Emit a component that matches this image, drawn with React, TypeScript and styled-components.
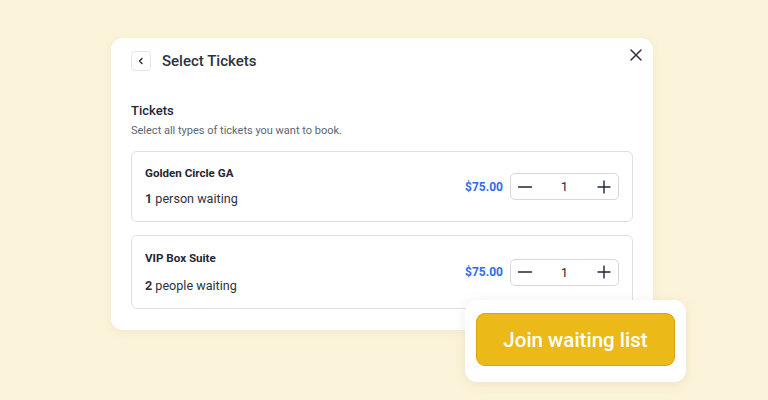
import React from "react";
import styled, { createGlobalStyle } from "styled-components";

const Global = createGlobalStyle`
  html, body { margin: 0; padding: 0; }
  body { background: #fcf4da; font-family: Roboto, "Noto Sans", sans-serif; -webkit-font-smoothing: antialiased; }
`;

const Page = styled.div`
  position: relative;
  width: 768px;
  height: 400px;
  overflow: hidden;
  background: #fcf4da;
  padding: 38px 0 0 111px;
  box-sizing: border-box;
`;

const Card = styled.div`
  position: relative;
  width: 542px;
  box-sizing: border-box;
  background: #fff;
  border-radius: 12px;
  padding: 13px 20px 21px;
  box-shadow: 0 2px 10px rgba(120, 100, 40, 0.08);
`;

const Header = styled.div`
  display: flex;
  align-items: center;
  gap: 11px;
  height: 20px;
`;

const BackButton = styled.button`
  width: 20px;
  height: 20px;
  padding: 0;
  display: flex;
  align-items: center;
  justify-content: center;
  border: 1px solid #e3e5e8;
  border-radius: 4px;
  background: #fff;
  color: #1f2937;
`;

const Title = styled.h1`
  margin: 0;
  font-size: 15px;
  font-weight: 500;
  color: #2c333d;
`;

const CloseButton = styled.button`
  position: absolute;
  top: 8px;
  right: 8px;
  width: 18px;
  height: 18px;
  padding: 0;
  border: none;
  background: none;
  display: flex;
  align-items: center;
  justify-content: center;
  color: #2c333d;
`;

const Section = styled.div`
  margin-top: 32px;
`;

const SectionTitle = styled.div`
  font-size: 13px;
  font-weight: 500;
  color: #1f2733;
  line-height: 16px;
`;

const SectionSub = styled.div`
  margin-top: 5px;
  font-size: 11px;
  color: #5f6670;
  line-height: 14px;
`;

const List = styled.div`
  margin-top: 13px;
  display: flex;
  flex-direction: column;
  gap: 13px;
`;

const TicketCard = styled.div<{ $h: number }>`
  height: ${(p) => p.$h}px;
  box-sizing: border-box;
  border: 1px solid #dcdfe3;
  border-radius: 6px;
  padding: 0 13px;
  display: flex;
  align-items: center;
  justify-content: space-between;
`;

const Info = styled.div<{ $gap: number }>`
  display: flex;
  flex-direction: column;
  gap: ${(p) => p.$gap}px;
`;

const TicketName = styled.div`
  font-size: 11.6px;
  font-weight: 700;
  color: #1f2733;
  line-height: 15px;
`;

const Waiting = styled.div`
  font-size: 12.6px;
  color: #2c333d;
  line-height: 16px;
  b { font-weight: 700; }
`;

const Right = styled.div`
  display: flex;
  align-items: center;
  gap: 7px;
`;

const Price = styled.div`
  font-size: 12px;
  font-weight: 700;
  color: #2f6cf0;
`;

const Stepper = styled.div`
  width: 109px;
  height: 27px;
  box-sizing: border-box;
  border: 1px solid #d5d8dc;
  border-radius: 5px;
  display: flex;
  align-items: center;
  justify-content: space-between;
  padding: 0 6px;
`;

const StepBtn = styled.button`
  width: 16px;
  height: 16px;
  padding: 0;
  border: none;
  background: none;
  display: flex;
  align-items: center;
  justify-content: center;
  color: #1f2733;
`;

const Qty = styled.span`
  font-size: 13px;
  color: #1f2733;
`;

const Floating = styled.div`
  position: absolute;
  left: 465px;
  top: 300px;
  width: 221px;
  height: 82px;
  box-sizing: border-box;
  background: #fff;
  border-radius: 12px;
  padding: 13px 11px;
  box-shadow: 0 2px 12px rgba(120, 100, 40, 0.12);
`;

const JoinButton = styled.button`
  width: 199px;
  height: 53px;
  box-sizing: border-box;
  border: 1px solid #d4a511;
  border-radius: 9px;
  background: #ebba19;
  color: #fff;
  font-family: Roboto, "Noto Sans", sans-serif;
  font-size: 20.5px;
  font-weight: 500;
`;

const Minus = () => (
  <svg width="16" height="16" viewBox="0 0 16 16" fill="none" stroke="currentColor" strokeWidth="1.4" strokeLinecap="round">
    <path d="M1.5 8h13" />
  </svg>
);

const Plus = () => (
  <svg width="16" height="16" viewBox="0 0 16 16" fill="none" stroke="currentColor" strokeWidth="1.4" strokeLinecap="round">
    <path d="M2 8h12M8 2v12" />
  </svg>
);

type Ticket = { name: string; count: number; label: string; h: number; gap: number };

const tickets: Ticket[] = [
  { name: "Golden Circle GA", count: 1, label: "person waiting", h: 71, gap: 10 },
  { name: "VIP Box Suite", count: 2, label: "people waiting", h: 74, gap: 12 },
];

export default function App() {
  return (
    <>
      <Global />
      <Page>
        <Card>
          <Header>
            <BackButton>
              <svg width="10" height="10" viewBox="0 0 10 10" fill="none" stroke="currentColor" strokeWidth="1.4" strokeLinecap="round" strokeLinejoin="round">
                <path d="M6 2.5L3.5 5L6 7.5" />
              </svg>
            </BackButton>
            <Title>Select Tickets</Title>
          </Header>
          <CloseButton>
            <svg width="12" height="12" viewBox="0 0 12 12" fill="none" stroke="currentColor" strokeWidth="1.5" strokeLinecap="round">
              <path d="M1 1l10 10M11 1L1 11" />
            </svg>
          </CloseButton>
          <Section>
            <SectionTitle>Tickets</SectionTitle>
            <SectionSub>Select all types of tickets you want to book.</SectionSub>
            <List>
              {tickets.map((t) => (
                <TicketCard key={t.name} $h={t.h}>
                  <Info $gap={t.gap}>
                    <TicketName>{t.name}</TicketName>
                    <Waiting>
                      <b>{t.count}</b> {t.label}
                    </Waiting>
                  </Info>
                  <Right>
                    <Price>$75.00</Price>
                    <Stepper>
                      <StepBtn><Minus /></StepBtn>
                      <Qty>1</Qty>
                      <StepBtn><Plus /></StepBtn>
                    </Stepper>
                  </Right>
                </TicketCard>
              ))}
            </List>
          </Section>
        </Card>
        <Floating>
          <JoinButton>Join waiting list</JoinButton>
        </Floating>
      </Page>
    </>
  );
}
